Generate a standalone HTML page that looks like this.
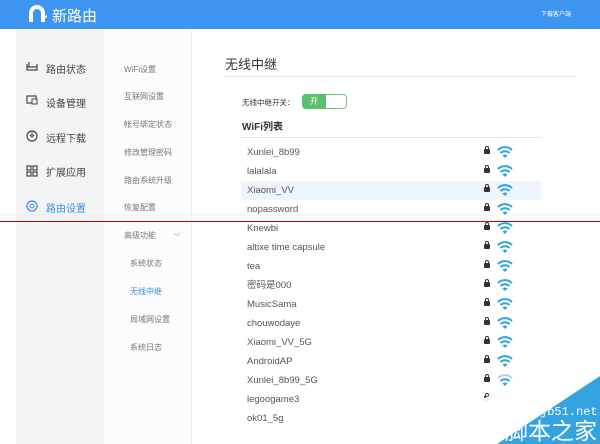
<!DOCTYPE html><html><head><meta charset="utf-8"><style>
*{margin:0;padding:0;box-sizing:border-box}
body{width:600px;height:444px;overflow:hidden;background:#fff;font-family:"Liberation Sans","Noto Sans CJK SC",sans-serif;position:relative;color:#555}
.hd{position:absolute;left:0;top:0;width:600px;height:29px;background:#3d95f0}
.abs{position:absolute;white-space:nowrap}
.c1{position:absolute;left:16px;top:30px;width:88px;height:414px;background:#f4f4f4}
.c2{position:absolute;left:104px;top:30px;width:88px;height:414px;background:#fcfcfc;border-right:1px solid #eee}
.n1{font-size:10px;color:#444}
.n2{font-size:8px;color:#777}
.row{position:absolute;left:241px;width:300px;height:19px;font-size:9.5px;color:#555;padding-left:6px;line-height:19px}
.lk{position:absolute;left:243px;top:6px;width:6px;height:5px;background:#333;border-radius:1px}
.lk:before{content:"";position:absolute;left:1px;top:-3px;width:4px;height:4px;border:1px solid #333;border-bottom:none;border-radius:2px 2px 0 0;box-sizing:border-box}
.wf{position:absolute;left:256px;top:2px}
</style></head><body>
<div class="hd"></div>
<svg class="abs" style="left:28px;top:5px" width="20" height="18"><path d="M3 17V8a6 6 0 0 1 12 0v9" stroke="#fff" stroke-width="4" fill="none"/><path d="M15 12l4-2v3z" fill="#fff"/></svg>
<div class="abs" style="left:52px;top:5px;color:#fff;font-size:15px">新路由</div>
<div class="abs" style="left:541px;top:9px;color:#fff;font-size:6px">下载客户端</div>
<div class="c1"></div><div class="c2"></div>
<svg class="abs" style="left:26px;top:61px" width="12" height="10"><path d="M1 3v6h10V3M1 6h10M3 1v5" stroke="#444" stroke-width="1.2" fill="none"/></svg>
<div class="abs n1" style="left:46px;top:61px">路由状态</div>
<svg class="abs" style="left:26px;top:95px" width="12" height="10"><rect x="1" y="1" width="9" height="7" stroke="#444" fill="none" stroke-width="1.2"/><rect x="6" y="4" width="5" height="5" fill="#f4f4f4" stroke="#444"/></svg>
<div class="abs n1" style="left:46px;top:95px">设备管理</div>
<svg class="abs" style="left:26px;top:130px" width="12" height="12"><circle cx="6" cy="6" r="5" stroke="#444" fill="none" stroke-width="1.2"/><path d="M6 2v5M4 5l2 2 2-2" stroke="#444" fill="none"/></svg>
<div class="abs n1" style="left:46px;top:130px">远程下载</div>
<svg class="abs" style="left:26px;top:165px" width="12" height="12"><g stroke="#444" fill="none" stroke-width="1.2"><rect x="1" y="1" width="4" height="4"/><rect x="7" y="1" width="4" height="4"/><rect x="1" y="7" width="4" height="4"/><rect x="7" y="7" width="4" height="4"/></g></svg>
<div class="abs n1" style="left:46px;top:164px">扩展应用</div>
<svg class="abs" style="left:26px;top:200px" width="12" height="12"><circle cx="6" cy="6" r="5" stroke="#3d8ee0" fill="none" stroke-width="1.3"/><circle cx="6" cy="6" r="2" stroke="#3d8ee0" fill="none"/></svg>
<div class="abs n1" style="left:46px;top:200px;color:#3d8ee0">路由设置</div>
<div class="abs n2" style="left:124px;top:64px">WiFi设置</div>
<div class="abs n2" style="left:124px;top:91px">互联网设置</div>
<div class="abs n2" style="left:124px;top:119px">帐号绑定状态</div>
<div class="abs n2" style="left:124px;top:147px">修改管理密码</div>
<div class="abs n2" style="left:124px;top:175px">路由系统升级</div>
<div class="abs n2" style="left:124px;top:202px">恢复配置</div>
<div class="abs n2" style="left:124px;top:230px">高级功能</div>
<div class="abs n2" style="left:174px;top:229px">⌵</div>
<div class="abs n2" style="left:130px;top:258px">系统状态</div>
<div class="abs n2" style="left:130px;top:286px;color:#3d8ee0">无线中继</div>
<div class="abs n2" style="left:130px;top:314px">局域网设置</div>
<div class="abs n2" style="left:130px;top:342px">系统日志</div>
<div class="abs" style="left:225px;top:54px;font-size:13px;color:#333">无线中继</div>
<div class="abs" style="left:224px;top:76px;width:351px;height:1px;background:#e2e2e2"></div>
<div class="abs" style="left:242px;top:97px;font-size:7.5px;color:#333">无线中继开关：</div>
<div class="abs" style="left:302px;top:94px;width:45px;height:15px;border-radius:4px;background:#fff;border:1px solid #6cc680"></div>
<div class="abs" style="left:302px;top:94px;width:24px;height:15px;border-radius:4px 0 0 4px;background:#5bc06f;color:#fff;font-size:8px;text-align:center;line-height:15px">开</div>
<div class="abs" style="left:242px;top:118px;font-size:10px;color:#333;font-weight:bold">WiFi列表</div>
<div class="abs" style="left:241px;top:137px;width:300px;height:1px;background:#e2e2e2"></div>
<div class="row" style="top:143px">Xunlei_8b99<i class="lk"></i><svg class="wf" width="16" height="14"><g stroke="#2fa5dd" stroke-width="2" fill="none"><path d="M1 5a10 10 0 0 1 14 0M3.5 8a6.5 6.5 0 0 1 9 0"/></g><path d="M5.5 10.5a3.5 3.5 0 0 1 5 0L8 13z" fill="#2fa5dd"/></svg></div>
<div class="row" style="top:162px">lalalala<i class="lk"></i><svg class="wf" width="16" height="14"><g stroke="#2fa5dd" stroke-width="2" fill="none"><path d="M1 5a10 10 0 0 1 14 0M3.5 8a6.5 6.5 0 0 1 9 0"/></g><path d="M5.5 10.5a3.5 3.5 0 0 1 5 0L8 13z" fill="#2fa5dd"/></svg></div>
<div class="row" style="top:181px;background:#eef5fc">Xiaomi_VV<i class="lk"></i><svg class="wf" width="16" height="14"><g stroke="#2fa5dd" stroke-width="2" fill="none"><path d="M1 5a10 10 0 0 1 14 0M3.5 8a6.5 6.5 0 0 1 9 0"/></g><path d="M5.5 10.5a3.5 3.5 0 0 1 5 0L8 13z" fill="#2fa5dd"/></svg></div>
<div class="row" style="top:200px">nopassword<i class="lk"></i><svg class="wf" width="16" height="14"><g stroke="#2fa5dd" stroke-width="2" fill="none"><path d="M1 5a10 10 0 0 1 14 0M3.5 8a6.5 6.5 0 0 1 9 0"/></g><path d="M5.5 10.5a3.5 3.5 0 0 1 5 0L8 13z" fill="#2fa5dd"/></svg></div>
<div class="row" style="top:219px">Knewbi<i class="lk"></i><svg class="wf" width="16" height="14"><g stroke="#2fa5dd" stroke-width="2" fill="none"><path d="M1 5a10 10 0 0 1 14 0M3.5 8a6.5 6.5 0 0 1 9 0"/></g><path d="M5.5 10.5a3.5 3.5 0 0 1 5 0L8 13z" fill="#2fa5dd"/></svg></div>
<div class="row" style="top:238px">altixe time capsule<i class="lk"></i><svg class="wf" width="16" height="14"><g stroke="#2fa5dd" stroke-width="2" fill="none"><path d="M1 5a10 10 0 0 1 14 0M3.5 8a6.5 6.5 0 0 1 9 0"/></g><path d="M5.5 10.5a3.5 3.5 0 0 1 5 0L8 13z" fill="#2fa5dd"/></svg></div>
<div class="row" style="top:257px">tea<i class="lk"></i><svg class="wf" width="16" height="14"><g stroke="#2fa5dd" stroke-width="2" fill="none"><path d="M1 5a10 10 0 0 1 14 0M3.5 8a6.5 6.5 0 0 1 9 0"/></g><path d="M5.5 10.5a3.5 3.5 0 0 1 5 0L8 13z" fill="#2fa5dd"/></svg></div>
<div class="row" style="top:276px">密码是000<i class="lk"></i><svg class="wf" width="16" height="14"><g stroke="#2fa5dd" stroke-width="2" fill="none"><path d="M1 5a10 10 0 0 1 14 0M3.5 8a6.5 6.5 0 0 1 9 0"/></g><path d="M5.5 10.5a3.5 3.5 0 0 1 5 0L8 13z" fill="#2fa5dd"/></svg></div>
<div class="row" style="top:295px">MusicSama<i class="lk"></i><svg class="wf" width="16" height="14"><g stroke="#2fa5dd" stroke-width="2" fill="none"><path d="M1 5a10 10 0 0 1 14 0M3.5 8a6.5 6.5 0 0 1 9 0"/></g><path d="M5.5 10.5a3.5 3.5 0 0 1 5 0L8 13z" fill="#2fa5dd"/></svg></div>
<div class="row" style="top:314px">chouwodaye<i class="lk"></i><svg class="wf" width="16" height="14"><g stroke="#2fa5dd" stroke-width="2" fill="none"><path d="M1 5a10 10 0 0 1 14 0M3.5 8a6.5 6.5 0 0 1 9 0"/></g><path d="M5.5 10.5a3.5 3.5 0 0 1 5 0L8 13z" fill="#2fa5dd"/></svg></div>
<div class="row" style="top:333px">Xiaomi_VV_5G<i class="lk"></i><svg class="wf" width="16" height="14"><g stroke="#2fa5dd" stroke-width="2" fill="none"><path d="M1 5a10 10 0 0 1 14 0M3.5 8a6.5 6.5 0 0 1 9 0"/></g><path d="M5.5 10.5a3.5 3.5 0 0 1 5 0L8 13z" fill="#2fa5dd"/></svg></div>
<div class="row" style="top:352px">AndroidAP<i class="lk"></i><svg class="wf" width="16" height="14"><g stroke="#2fa5dd" stroke-width="2" fill="none"><path d="M1 5a10 10 0 0 1 14 0M3.5 8a6.5 6.5 0 0 1 9 0"/></g><path d="M5.5 10.5a3.5 3.5 0 0 1 5 0L8 13z" fill="#2fa5dd"/></svg></div>
<div class="row" style="top:371px">Xunlei_8b99_5G<i class="lk"></i><svg class="wf" width="16" height="14"><g stroke-width="2" fill="none"><path d="M1 5a10 10 0 0 1 14 0" stroke="#ccc"/><path d="M3.5 8a6.5 6.5 0 0 1 9 0" stroke="#2fa5dd"/></g><path d="M5.5 10.5a3.5 3.5 0 0 1 5 0L8 13z" fill="#2fa5dd"/></svg></div>
<div class="row" style="top:390px">legoogame3<i class="lk"></i></div>
<div class="row" style="top:409px">ok01_5g</div>
<div class="abs" style="left:0;top:221px;width:600px;height:1px;background:#cc0000"></div>
<svg class="abs" style="left:470px;top:360px" width="130" height="84"><polygon points="10,40 100,0 130,0 130,16 27,84 10,84" fill="#ffffff" opacity="0.92"/><polygon points="27,84 130,16 130,84" fill="#35a3df"/></svg>
<div class="abs" style="left:540px;top:405px;color:#fff;font-size:12px;font-family:'Liberation Mono',monospace">jb51.net</div>
<div class="abs" style="left:505px;top:418px;color:#fff;font-size:23px;line-height:26px">脚本之家</div>
</body></html>
